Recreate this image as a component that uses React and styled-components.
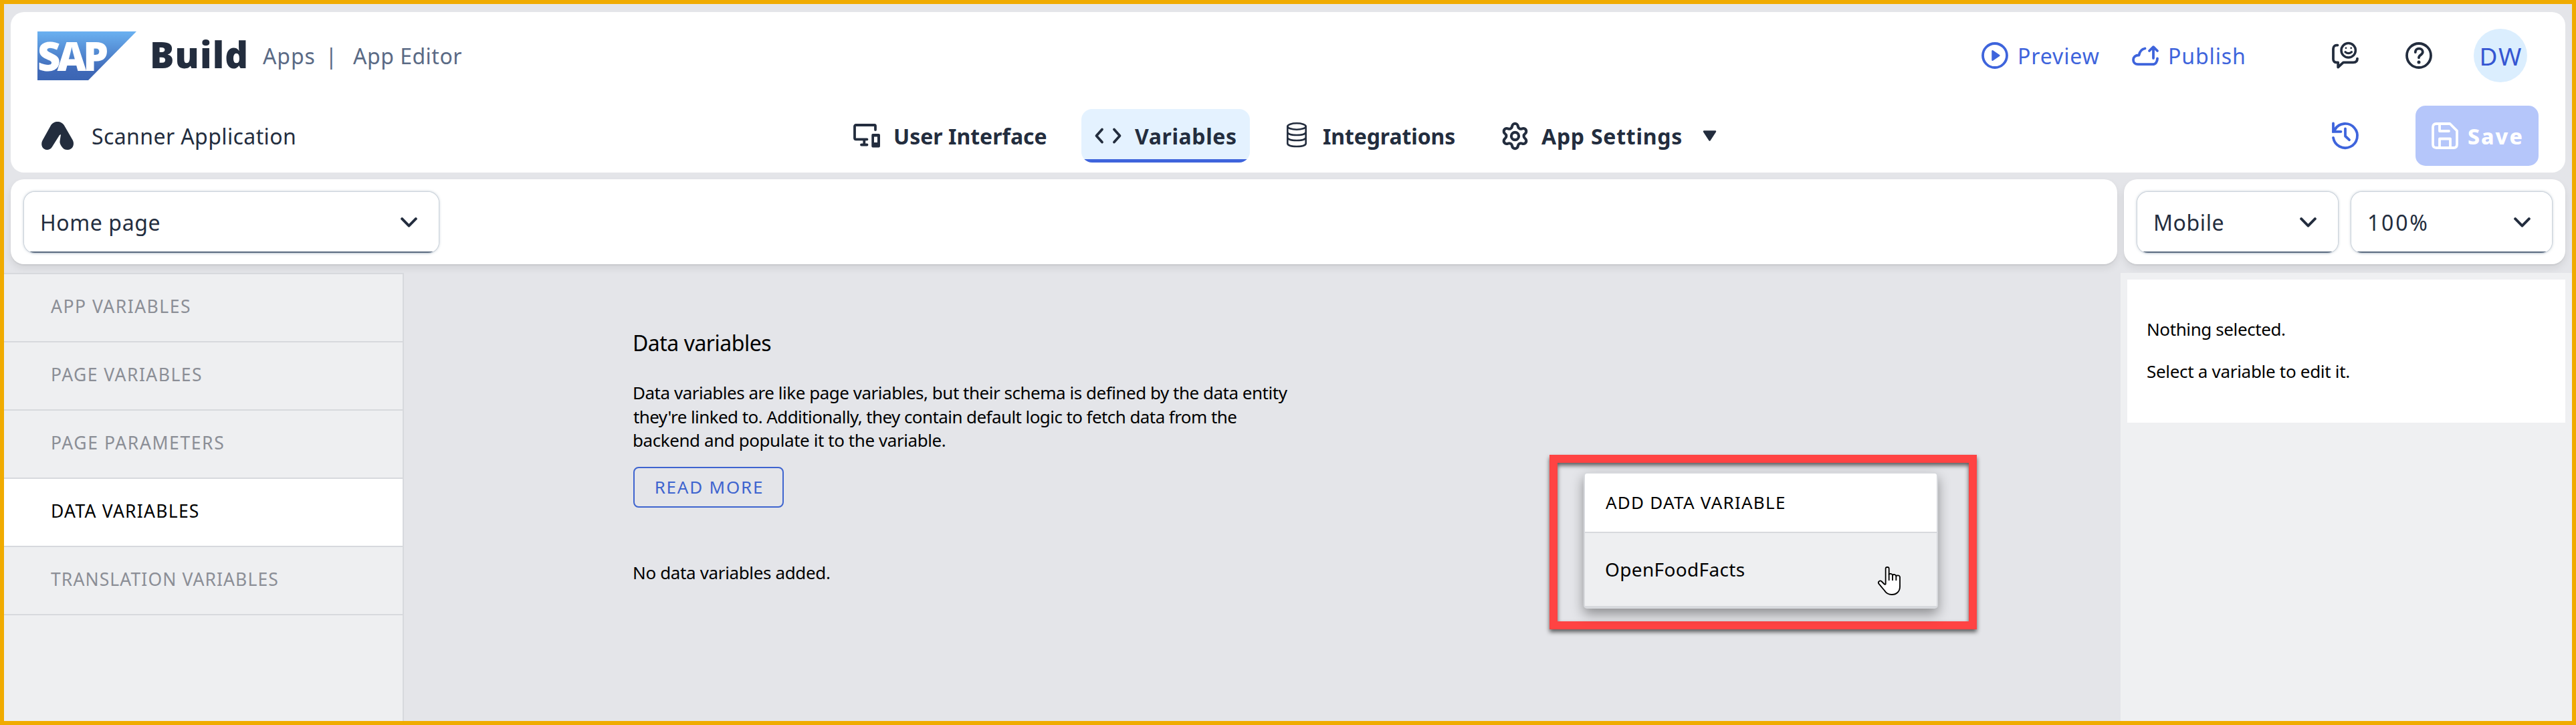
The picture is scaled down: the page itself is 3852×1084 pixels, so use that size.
import React from "react";
import styled, { createGlobalStyle } from "styled-components";
import { Settings } from "lucide-react";

const GlobalStyle = createGlobalStyle`
  *, *::before, *::after { box-sizing: border-box; }
  body { margin: 0; background: #e4e5e9; font-family: "Noto Sans", "Open Sans", sans-serif; }
`;
const ink = "#232d3e";
const blue = "#3e64dc";

const Frame = styled.div`
  width: 3852px;
  height: 1084px;
  border: 6px solid #f0ab00;
  background: #e4e5e9;
  display: flex;
  flex-direction: column;
  overflow: hidden;
`;
const Header = styled.header`
  margin: 12px 10px 0;
  height: 240px;
  flex: none;
  background: #fff;
  border-radius: 20px;
`;
const TopRow = styled.div`
  height: 130px;
  padding: 0 57px 0 40px;
  display: flex;
  align-items: center;
`;
const AppRow = styled.div`
  height: 110px;
  padding: 0 40px 0 46px;
  display: flex;
  align-items: center;
`;
const Brand = styled.div`
  display: flex;
  align-items: center;
  flex: 1;
  white-space: nowrap;
`;
const Product = styled.span`
  width: 169px;
  margin-left: 19px;
  padding-bottom: 4px;
  font-size: 54px;
  line-height: 60px;
  font-weight: 900;
  color: ${ink};
  letter-spacing: 1.2px;
`;
const Crumb = styled.span`
  width: ${(p) => p.$w}px;
  font-size: 32px;
  color: #5a6a85;
  letter-spacing: ${(p) => p.$ls || 0}px;
`;
const TopAction = styled.button`
  all: unset;
  display: flex;
  align-items: center;
  gap: 14px;
  width: ${(p) => p.$w}px;
  font-size: 32px;
  color: ${blue};
  white-space: nowrap;
  letter-spacing: ${(p) => p.$ls || 0}px;
`;
const IconSlot = styled.span`
  display: flex;
  width: 40px;
  height: 40px;
  align-items: center;
  justify-content: center;
  flex: none;
  color: ${(p) => p.$color || "inherit"};
  margin-right: ${(p) => p.$after || 0}px;
`;
const Avatar = styled.div`
  width: 80px;
  height: 80px;
  border-radius: 50%;
  background: #dbeefe;
  color: #3556d2;
  font-size: 37px;
  letter-spacing: 2px;
  padding-left: 2px;
  display: flex;
  align-items: center;
  justify-content: center;
`;
const AppName = styled.div`
  width: 1119px;
  margin-left: 27px;
  font-size: 32px;
  color: ${ink};
  letter-spacing: 0.4px;
`;
const Tabs = styled.nav`
  display: flex;
  gap: 30px;
  flex: 1;
`;
const Tab = styled.a`
  width: ${(p) => p.$w}px;
  height: 80px;
  padding-left: 20px;
  display: flex;
  align-items: center;
  gap: 20px;
  font-size: 32px;
  font-weight: 700;
  color: ${ink};
  white-space: nowrap;
  border-radius: 16px;
  letter-spacing: ${(p) => p.$ls || 0}px;
  background: ${(p) => (p.$on ? "linear-gradient(#e4f2ff 0 75px, #3e64dc 75px)" : "none")};
`;
const Caret = styled.span`
  margin-left: 10px;
  display: flex;
`;
const SaveButton = styled.button`
  all: unset;
  box-sizing: border-box;
  width: 184px;
  height: 90px;
  padding-left: 24px;
  border-radius: 15px;
  background: #b5c6fa;
  color: #fff;
  display: flex;
  align-items: center;
  gap: 14px;
  font-size: 32px;
  font-weight: 800;
  letter-spacing: 2px;
`;
const Toolbars = styled.div`
  display: flex;
  gap: 10px;
  margin: 10px 10px 13px;
  height: 127px;
  flex: none;
`;
const ToolCard = styled.div`
  flex: ${(p) => (p.$w ? `0 0 ${p.$w}px` : 1)};
  display: flex;
  gap: 20px;
  padding: 19px 20px 0;
  background: #fff;
  border-radius: 20px;
  box-shadow: 0 2px 2px rgba(0, 0, 0, 0.06), 0 6px 12px rgba(0, 0, 0, 0.08);
`;
const Select = styled.div`
  width: ${(p) => p.$w}px;
  height: 91px;
  padding: 0 32px 0 24px;
  border-radius: 16px;
  background: linear-gradient(#fff 0 89px, #5b6b80 89px);
  box-shadow: 0 0 0 1px #cbd3db, 0 0 4px rgba(91, 115, 139, 0.6);
  display: flex;
  align-items: center;
  justify-content: space-between;
  font-size: 32px;
  color: ${ink};
  letter-spacing: ${(p) => p.$ls || 0}px;
`;
const Body = styled.div`
  display: flex;
  flex: 1;
  min-height: 0;
`;
const Sidebar = styled.aside`
  width: 598px;
  flex: none;
  background: #eeeff1;
  border-top: 2px solid #d7d9dd;
  border-right: 2px solid #d7d9dd;
`;
const SideItem = styled.div`
  height: 102px;
  padding: 0 0 4px 70px;
  border-bottom: 2px solid #d7d9dd;
  display: flex;
  align-items: center;
  font-size: 26.5px;
  letter-spacing: ${(p) => p.$ls}px;
  color: ${(p) => (p.$on ? "#000" : "#8b8e96")};
  background: ${(p) => (p.$on ? "#fff" : "transparent")};
`;
const Canvas = styled.main`
  position: relative;
  flex: 1;
  padding: 82px 0 0 342px;
  color: #000;
  font-size: 26px;
`;
const Title = styled.h2`
  margin: 0;
  font-size: 32px;
  font-weight: 400;
  line-height: 46px;
`;
const Paragraph = styled.p`
  margin: 34px 0 0;
  line-height: 35.6px;
`;
const Line = styled.span`
  display: table;
  white-space: nowrap;
  letter-spacing: ${(p) => p.$ls || 0}px;
  margin-left: ${(p) => p.$x || 0}px;
`;
const ReadMore = styled.button`
  all: unset;
  box-sizing: border-box;
  margin: 21px 0 0 1px;
  padding-left: 2px;
  width: 225px;
  height: 61px;
  border: 2px solid #3e64cf;
  border-radius: 8px;
  color: #3e64cf;
  display: flex;
  align-items: center;
  justify-content: center;
  letter-spacing: 1.8px;
`;
const Empty = styled.div`
  margin-top: 79px;
  line-height: 36px;
`;
const Highlight = styled.div`
  position: absolute;
  left: 1713px;
  top: 272px;
  width: 639px;
  height: 261px;
  border: 12px solid #ff4343;
  filter: drop-shadow(0 4px 3px rgba(0, 0, 0, 0.6));
`;
const Menu = styled.div`
  position: absolute;
  left: 1764px;
  top: 298px;
  width: 530px;
  height: 204px;
  border: 2px solid #d7d9dd;
  border-radius: 5px;
  background: #d7d9dd;
  box-shadow: 0 8px 18px rgba(0, 0, 0, 0.38);
  overflow: hidden;
`;
const MenuRow = styled.div`
  height: ${(p) => p.$h}px;
  padding: 0 0 2px ${(p) => p.$x}px;
  margin-bottom: 2px;
  display: flex;
  align-items: center;
  background: ${(p) => p.$bg};
  font-size: ${(p) => p.$size}px;
  letter-spacing: ${(p) => p.$ls || 0}px;
`;
const Pointer = styled.div`
  position: absolute;
  left: 2204px;
  top: 439px;
`;
const Inspector = styled.aside`
  width: 675px;
  flex: none;
  background: #eff0f2;
  padding: 10px 10px 0;
`;
const Note = styled.div`
  height: 214px;
  background: #fff;
  padding: 56px 0 0 29px;
  font-size: 26px;
  line-height: 36px;
  color: #000;
  display: flex;
  flex-direction: column;
  gap: 27px;
`;

const stroke = { fill: "none", stroke: "currentColor", strokeWidth: 4, strokeLinecap: "round", strokeLinejoin: "round" };
const Glyph = ({ children, w = 3.8 }) => (
  <svg width="40" height="40" viewBox="0 0 40 40" overflow="visible" {...stroke} strokeWidth={w}>{children}</svg>
);
const Chevron = () => (
  <svg width="25" height="15" viewBox="0 0 25 15" {...stroke}><path d="M2.2 2.2 12.5 12.6 22.8 2.2" /></svg>
);
const Logo = () => (
  <svg width="149" height="73" viewBox="0 0 149 73" overflow="visible">
    <defs>
      <linearGradient id="sap" x1="0" y1="0" x2="0" y2="1">
        <stop offset="0" stopColor="#6ab1f1" />
        <stop offset="0.8" stopColor="#3f69b8" />
        <stop offset="1" stopColor="#3b65b3" />
      </linearGradient>
    </defs>
    <path d="M0 0H148L76 73H0Z" fill="url(#sap)" />
    <text x="0" y="59" fontSize="60" fontWeight="900" fill="#fff" letterSpacing="-5">SAP</text>
  </svg>
);
const AppMark = () => (
  <svg width="48" height="42" viewBox="0 0 48 42" fill={ink} overflow="visible">
    <path d="M24 0C28 0 32 2 34 5.5L47 28C50 35 46 42 39 42C35 42 32.500 40.500 30.500 37.500C27.500 33 27 31 27.800 27L29 19L27 20L16 37.500C14 41 11 42 8.500 42C2 42 -2 35 1.500 28L14 5.500C16 2 20 0 24 0Z" />
  </svg>
);
const PlayIcon = () => (
  <Glyph><circle cx="20" cy="20" r="18" /><path d="M16.500 13.200V26.800L26.300 20Z" fill="currentColor" strokeWidth="2.500" /></Glyph>
);
const PublishIcon = () => (
  <Glyph><path d="M19.500 9.500C14 10.500 11.500 14 10.500 19.500C5 19.500 2 22.500 2 26.500C2 30.500 5 33.200 9 33.200H31C35.500 33.200 38 29 38 24.500M32 24V7.500M26 13 32 7.200 38 13" /></Glyph>
);
const FeedbackIcon = () => (
  <Glyph>
    <path d="M8.500 4.600H7C4 4.600 2 7 2 10V25.500C2 28.500 4 30.400 7 30.400H9.200V37.500L17 30.400H32C36 30.400 38 28.500 38 24.600" />
    <circle cx="24.700" cy="12.300" r="10.700" strokeWidth="3.500" />
    <path d="M20 14.700Q24.700 18.700 29.500 14.700" strokeWidth="3.200" />
    <path d="M21 8.800V8.810M28.700 8.800V8.810" strokeWidth="2.800" />
  </Glyph>
);
const HelpIcon = () => (
  <Glyph><circle cx="20" cy="20" r="18" /><path d="M14.800 15C14.800 11.600 17 9.700 20.300 9.700C23.500 9.700 25.800 11.800 25.800 14.800C25.800 19.300 20 19 20 23.300" /><path d="M20 30V30.010" strokeWidth="5" /></Glyph>
);
const HistoryIcon = () => (
  <Glyph><path d="M2 22.800A18.100 18.100 0 1 0 4.500 10.500" /><path d="M2 1.500V13.800H13.500" strokeLinejoin="miter" /><path d="M2 13.500 6 9" /><path d="M20 9.500V20.500L26 26.200" /></Glyph>
);
const SaveIcon = () => (
  <Glyph><path d="M7 2H27.500L38 12.500V33Q38 38 33 38H7Q2 38 2 33V7Q2 2 7 2ZM12 2V13H26M12 38V24.500H28V38" /></Glyph>
);
const ScreensIcon = () => (
  <Glyph>
    <path d="M33 11V5Q33 4 32 4H4Q2 4 2 6V23.500Q2 25.300 4 25.300H20.500M16.300 26V33.500M12 33.500H20.500" />
    <path fillRule="evenodd" fill="currentColor" stroke="none" d="M29 17H38Q40 17 40 19V35.500Q40 37.500 38 37.500H29Q27.300 37.500 27.300 35.500V19Q27.300 17 29 17ZM31 21.500V30H36V21.500Z" />
  </Glyph>
);
const CodeIcon = () => <Glyph><path d="M11 10.500 2.500 20 11 29.500M29 10.500 37.500 20 29 29.500" /></Glyph>;
const DatabaseIcon = () => (
  <Glyph w={2.6}>
    <ellipse cx="20" cy="6" rx="13.700" ry="4.700" />
    <path d="M6.300 6V31.500C6.300 37.500 33.700 37.500 33.700 31.500V6M6.300 14.500C6.300 20.500 33.700 20.500 33.700 14.500M6.300 22.500C6.300 28.500 33.700 28.500 33.700 22.500" />
  </Glyph>
);
const PointerHand = () => (
  <svg width="34" height="43" viewBox="0 0 102 129" overflow="visible" fill="#fff" stroke="#000" strokeWidth="5.500" strokeLinejoin="round">
    <path d="M35 78V9C35 1 50 1 50 9V35C54 31 64 32 66 39C70 34 81 35 82 43C86 38 98 39 99 47V90C99 112 84 126 63 126C48 126 36 118 30 108L4 77C-1 69 9 61 16 66L28 78C31 81 35 82 35 78Z" />
    <path d="M50 33V63M66 37V63M82 41V63" fill="none" />
  </svg>
);

const sideItems = [
  ["APP VARIABLES", 1.5],
  ["PAGE VARIABLES", 1.45],
  ["PAGE PARAMETERS", 1.6],
  ["DATA VARIABLES", 1.25],
  ["TRANSLATION VARIABLES", 1.1],
];

export default function App() {
  return (
    <>
      <GlobalStyle />
      <Frame>
        <Header>
          <TopRow>
            <Brand>
              <Logo />
              <Product>Build</Product>
              <Crumb $w={93.5} $ls={0.9}>Apps</Crumb>
              <Crumb $w={41.5}>|</Crumb>
              <Crumb $w={170} $ls={0.5}>App Editor</Crumb>
            </Brand>
            <TopAction $w={225} $ls={0.9}><PlayIcon />Preview</TopAction>
            <TopAction $w={299} $ls={0.9}><PublishIcon />Publish</TopAction>
            <IconSlot $color={ink} $after={70}><FeedbackIcon /></IconSlot>
            <IconSlot $color={ink} $after={62}><HelpIcon /></IconSlot>
            <Avatar>DW</Avatar>
          </TopRow>
          <AppRow>
            <AppMark />
            <AppName>Scanner Application</AppName>
            <Tabs>
              <Tab $w={331}><IconSlot><ScreensIcon /></IconSlot>User Interface</Tab>
              <Tab $w={252} $on $ls={0.6}><IconSlot><CodeIcon /></IconSlot>Variables</Tab>
              <Tab $w={296} $ls={-0.12}><IconSlot $after={-1}><DatabaseIcon /></IconSlot>Integrations</Tab>
              <Tab $w={362} $ls={0.75}>
                <IconSlot><Settings size={45} strokeWidth={2.2} style={{ flex: "none" }} /></IconSlot>App Settings
                <Caret><svg width="21" height="17" viewBox="0 0 21 17"><path d="M2 1.500H19L10.500 14.500Z" fill={ink} stroke={ink} strokeWidth="2.500" strokeLinejoin="round" /></svg></Caret>
              </Tab>
            </Tabs>
            <IconSlot $color={blue} $after={85}><HistoryIcon /></IconSlot>
            <SaveButton><SaveIcon />Save</SaveButton>
          </AppRow>
        </Header>
        <Toolbars>
          <ToolCard><Select $w={620} $ls={0.6}>Home page<Chevron /></Select></ToolCard>
          <ToolCard $w={660}>
            <Select $w={300} $ls={0.6}>Mobile<Chevron /></Select>
            <Select $w={300} $ls={2.8}>100%<Chevron /></Select>
          </ToolCard>
        </Toolbars>
        <Body>
          <Sidebar>
            {sideItems.map(([label, ls]) => (
              <SideItem key={label} $ls={ls} $on={label === "DATA VARIABLES"}>{label}</SideItem>
            ))}
          </Sidebar>
          <Canvas>
            <Title><Line $ls={-0.5}>Data variables</Line></Title>
            <Paragraph>
              <Line $ls={-0.48}>Data variables are like page variables, but their schema is defined by the data entity</Line>
              <Line $ls={-0.58} $x={1}>they're linked to. Additionally, they contain default logic to fetch data from the</Line>
              <Line $ls={-0.43}>backend and populate it to the variable.</Line>
            </Paragraph>
            <ReadMore>READ MORE</ReadMore>
            <Empty><Line $ls={-0.36}>No data variables added.</Line></Empty>
            <Highlight />
            <Menu>
              <MenuRow $h={87} $x={31} $bg="#fff" $size={26} $ls={1.25}>ADD DATA VARIABLE</MenuRow>
              <MenuRow $h={109} $x={30} $bg="#eeeff1" $size={28} $ls={0.35}>OpenFoodFacts</MenuRow>
            </Menu>
            <Pointer><PointerHand /></Pointer>
          </Canvas>
          <Inspector>
            <Note>
              <Line $ls={-0.4}>Nothing selected.</Line>
              <Line $ls={-0.3}>Select a variable to edit it.</Line>
            </Note>
          </Inspector>
        </Body>
      </Frame>
    </>
  );
}
